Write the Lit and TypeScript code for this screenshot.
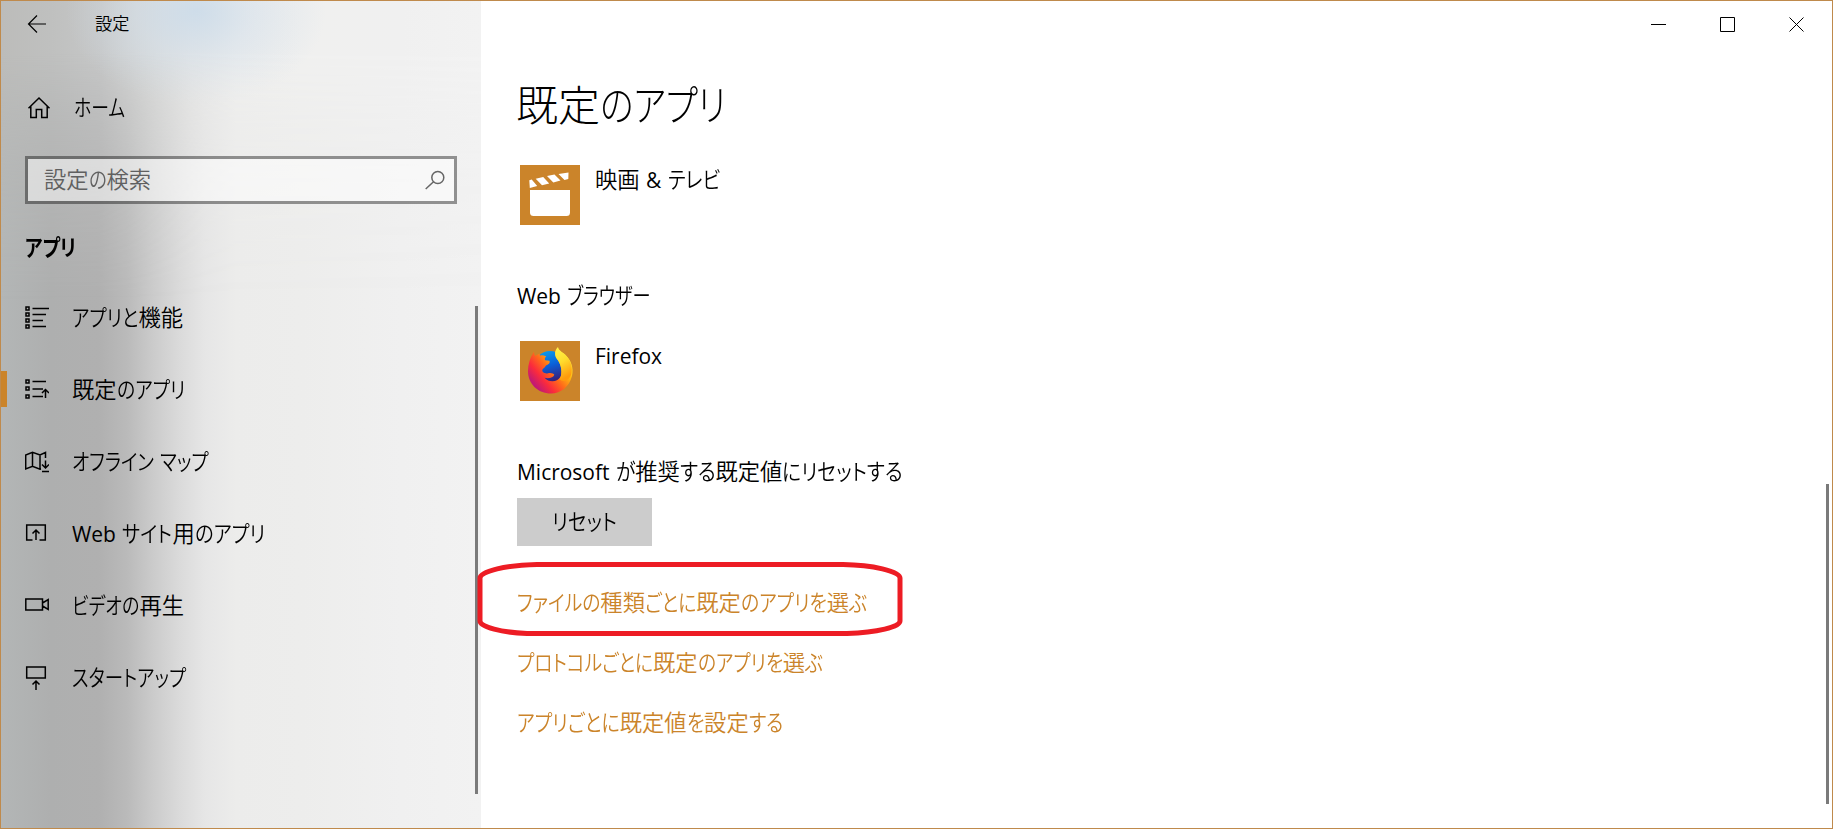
import { LitElement, html, css, svg } from "lit";
import { customElement, property } from "lit/decorators.js";

/* One line of text whose kana are condensed so that the line takes `width` pixels. */
@customElement("fit-text")
class FitText extends LitElement {
  @property() text = "";
  @property({ type: Number }) width = 0;

  static styles = css`
    :host { display: inline-flex; white-space: pre; font-feature-settings: "palt"; }
    .run { display: block; flex: none; }
    .kana { transform-origin: 0 50%; }
    .latin { font-size: 0.94em; font-weight: 400; word-spacing: 1px; }
  `;

  private runs() {
    return this.text.match(/[\u3040-\u30ff]+|[\u0020-\u007e]+|[^\u0020-\u007e\u3040-\u30ff]+/g) ?? [];
  }

  private kind(run: string) {
    if (/[\u3040-\u30ff]/.test(run)) return "kana";
    return /[\u0020-\u007e]/.test(run) ? "latin" : "kanji";
  }

  firstUpdated() {
    const spans = [...this.renderRoot.querySelectorAll<HTMLElement>(".run")];
    let fixed = 0;
    let kana = 0;
    for (const s of spans) {
      const w = s.getBoundingClientRect().width;
      if (s.classList.contains("kana")) kana += w;
      else fixed += w;
    }
    if (!kana || !this.width) return;
    const k = (this.width - fixed) / kana;
    for (const s of spans) {
      if (!s.classList.contains("kana")) continue;
      const w = s.getBoundingClientRect().width;
      s.style.width = `${w * k}px`;
      s.style.transform = `scaleX(${k})`;
    }
  }

  render() {
    return this.runs().map((r) => html`<span class="run ${this.kind(r)}">${r}</span>`);
  }
}

const box = (y: number) => svg`<rect x="1" y="${y}" width="3" height="3"/>`;

const icons: Record<string, unknown> = {
  features: svg`${[1, 7, 13, 19].map(box)}<path d="M7.5 2.5H24M7.5 8.5H21M7.5 14.5H18M7.5 20.5H21"/>`,
  defaults: svg`${[2, 9, 17].map((y) => box(y))}<path d="M7.5 3.5H21M7.5 11H18M7.5 18.5H18M20.5 20V11.5M17 15l3.5-3.5L24 15"/>`,
  maps: svg`<path d="M16 19l-1 .3-7.500-3L.7 19V5L7.500 2.200l7.500 2.800 5.500-2.500V8M7.500 2.200V16.300M15 5V19M20.500 10.500V18M17 14.500l3.500 3.500 3.500-3.500M17 21.500H24"/>`,
  sites: svg`<path d="M7.500 18H1.700V3H20.300V18H14.500M11 18V8M7.500 11.500L11 8l3.500 3.500"/>`,
  video: svg`<path d="M.8 5H17.500V16H.8ZM17.500 9L23.200 5.500V15.500L17.500 12"/>`,
  startup: svg`<path d="M1.700 1H20.300V12H1.700ZM11 24V15M7.500 18.500L11 15l3.500 3.500"/>`,
};

const nav = [
  { icon: "features", text: "アプリと機能", w: 111 },
  { icon: "defaults", text: "既定のアプリ", w: 113 },
  { icon: "maps", text: "オフライン マップ", w: 137 },
  { icon: "sites", text: "Web サイト用のアプリ", w: 193 },
  { icon: "video", text: "ビデオの再生", w: 112 },
  { icon: "startup", text: "スタートアップ", w: 114 },
];

const links = [
  { text: "ファイルの種類ごとに既定のアプリを選ぶ", w: 350 },
  { text: "プロトコルごとに既定のアプリを選ぶ", w: 306 },
  { text: "アプリごとに既定値を設定する", w: 266 },
];

@customElement("app-root")
class AppRoot extends LitElement {
  static styles = css`
    :host {
      display: block;
      height: 829px;
      overflow: hidden;
      font-family: "Open Sans", "Noto Sans CJK JP", sans-serif;
      font-size: 22.3px;
      font-weight: 350;
      line-height: 32px;
      color: #000;
    }
    * { box-sizing: border-box; }
    svg { display: block; fill: none; stroke: #000; stroke-width: 1.5; flex: none; }
    .window {
      position: relative;
      display: flex;
      width: 1833px;
      height: 829px;
      border: 1px solid #bf8a4c;
      background: #fff;
      overflow: hidden;
    }
    .side {
      position: relative;
      isolation: isolate;
      width: 480px;
      display: flex;
      flex-direction: column;
      background: linear-gradient(90deg, #b3b6b6 0, #aeafaf 50px, #b0b0b0 98px, #bababa 126px, #cbcbcb 152px, #dadada 178px, #e6e6e6 204px, #ececeb 235px, #ededec 300px, #f0f0f0 400px, #f2f2f2 480px);
    }
    .side::before {
      content: "";
      position: absolute;
      z-index: -1;
      inset: 0 0 auto 0;
      height: 300px;
      background:
        radial-gradient(ellipse 130px 95px at 195px 10px, rgba(202, 219, 234, 0.85), rgba(210, 223, 235, 0.5) 45%, rgba(225, 232, 240, 0) 100%),
        linear-gradient(90deg, #bcbcba 0, #bfc0bf 50px, #c6c7c7 100px, #d6d7d6 145px, #e5e5e4 190px, #eeeeed 235px, #f0f0ef 300px, #f0f0f0 400px, #f2f2f2 480px);
      -webkit-mask-image: linear-gradient(#000 0, #000 50px, rgba(0, 0, 0, 0.6) 110px, rgba(0, 0, 0, 0.3) 180px, transparent 300px);
      mask-image: linear-gradient(#000 0, #000 50px, rgba(0, 0, 0, 0.6) 110px, rgba(0, 0, 0, 0.3) 180px, transparent 300px);
    }
    .bar { height: 46px; display: flex; align-items: center; padding-left: 26px; font-size: 17.200px; }
    .bar svg { margin-right: 46px; stroke-width: 1.200; }
    .home { height: 72px; margin-top: 25px; display: flex; align-items: center; padding-left: 26px; }
    .home svg { margin-right: 21px; }
    .search {
      width: 432px;
      height: 48px;
      margin: 12px 0 0 24px;
      padding: 0 9px 0 16px;
      border: 3px solid rgba(0, 0, 0, 0.4);
      background: rgba(255, 255, 255, 0.5);
      background-clip: padding-box;
      display: flex;
      align-items: center;
      justify-content: space-between;
      color: #606060;
    }
    .search svg { stroke: #666; }
    .group { height: 78px; padding: 12px 0 0 24px; line-height: 64px; font-weight: 700; }
    .item { height: 72px; display: flex; align-items: center; padding-left: 24px; position: relative; }
    .item svg { margin-right: 23px; }
    .item.on::before { content: ""; position: absolute; left: 0; top: 17px; width: 6px; height: 36px; background: #cb842a; }
    .thumb { position: absolute; width: 3px; background: #7a7a7a; }
    .thumb.a { left: 474px; top: 305px; height: 488px; }
    .thumb.b { left: 1825px; top: 483px; height: 320px; }
    .main { flex: 1; display: flex; flex-direction: column; padding-left: 36px; position: relative; }
    .caps { position: absolute; right: 1px; top: 0; display: flex; }
    .caps span { width: 69px; height: 46px; display: grid; place-items: center; }
    .caps svg { stroke-width: 1; }
    h1 { margin: 68px 0 0; height: 72px; font-size: 42px; line-height: 72px; font-weight: 300; }
    h1 fit-text { margin-left: -1px; }
    .app { display: flex; height: 60px; margin: 24px 0 0 3px; gap: 15px; }
    .app svg { background: #cb842a; stroke: none; }
    .app fit-text { line-height: 30px; }
    .label { height: 32px; margin-top: 55px; }
    .app.ff { margin-top: 29px; }
    .label.ms { margin-top: 55px; }
    .btn { width: 135px; height: 48px; margin-top: 10px; background: #ccc; display: flex; align-items: center; justify-content: center; }
    .links { display: flex; flex-direction: column; margin-top: 27px; color: #cb842a; }
    .links div { height: 60px; display: flex; align-items: center; }
    .ring { position: absolute; left: 476px; top: 560px; stroke: #ed1c24; stroke-width: 5; }
  `;

  render() {
    return html`
      <div class="window">
        <div class="side">
          <div class="bar">
            <svg width="22" height="20"><path d="M19 10H2M10 1.500L1.500 10L10 18.500"/></svg>
            <fit-text text="設定"></fit-text>
          </div>
          <div class="home">
            <svg width="26" height="24"><path d="M1.500 12.300L12 2L22.500 12.300M3.800 10.500V21.500H9.300V13.500H14.700V21.500H20.200V10.500"/></svg>
            <fit-text text="ホーム" .width=${51}></fit-text>
          </div>
          <div class="search">
            <fit-text text="設定の検索" .width=${107}></fit-text>
            <svg width="20" height="20"><circle cx="12.800" cy="7.500" r="6"/><path d="M8.500 11.700L.7 19"/></svg>
          </div>
          <div class="group"><fit-text text="アプリ" .width=${51}></fit-text></div>
          ${nav.map(
            (n, i) => html`<div class="item ${i === 1 ? "on" : ""}">
              <svg width="24" height="24">${icons[n.icon]}</svg>
              <fit-text .text=${n.text} .width=${n.w}></fit-text>
            </div>`
          )}
        </div>
        <div class="main">
          <div class="caps">
            <span><svg width="15" height="15"><path d="M0 7.500H15"/></svg></span>
            <span><svg width="15" height="15"><path d="M.5.5H14.500V14.500H.5Z"/></svg></span>
            <span><svg width="15" height="15"><path d="M.5.5L14.500 14.500M14.500.5L.5 14.500"/></svg></span>
          </div>
          <h1><fit-text text="既定のアプリ" .width=${210}></fit-text></h1>
          <div class="app">
            <svg width="60" height="60" viewBox="0 0 60 60">
              <g fill="#fff">
                <path d="M10 25H50V47.500Q50 51 46.500 51H13.500Q10 51 10 47.500Z"/>
                <path d="M9.300 15.200L11.700 14.600L17.200 21L9.800 23ZM15.700 13.700L23.200 12L29.200 18.500L22 20.300ZM27 11L34.500 9.500L40.500 15.500L33.300 17.500ZM38.500 9L48.500 7.500L48.300 14L44.500 15Z"/>
              </g>
            </svg>
            <fit-text text="映画 & テレビ" .width=${125}></fit-text>
          </div>
          <div class="label"><fit-text text="Web ブラウザー" .width=${134}></fit-text></div>
          <div class="app ff">
            <svg width="60" height="60" viewBox="0 0 60 60">
              <defs>
                <linearGradient id="fx" x1="0.850" y1="0.100" x2="0.100" y2="0.750">
                  <stop offset="0" stop-color="#fff044"/><stop offset=".3" stop-color="#ffb60f"/>
                  <stop offset=".55" stop-color="#ff6a1a"/><stop offset=".78" stop-color="#fb2b3c"/>
                  <stop offset="1" stop-color="#c41a72"/>
                </linearGradient>
                <linearGradient id="gl" x1="0" y1="0" x2=".3" y2="1">
                  <stop offset="0" stop-color="#07a8f0"/><stop offset=".55" stop-color="#0b5fd8"/><stop offset="1" stop-color="#35227e"/>
                </linearGradient>
                <linearGradient id="tl" x1="0" y1="0" x2=".3" y2="1">
                  <stop offset="0" stop-color="#fff44c"/><stop offset=".5" stop-color="#ffdc2e"/><stop offset="1" stop-color="#ff9b0c"/>
                </linearGradient>
              </defs>
              <circle cx="30" cy="26" r="16" fill="url(#gl)"/>
              <path fill="url(#fx)" d="M14 10.500C14 13 14.500 14 15.500 15C17 13.600 18.500 13 20 12.800C19 14 19.500 14.500 20.500 14.500C22 14 24 14.300 26.300 15.500C24.800 16.500 24.500 18 25.200 19.200L29.500 19.800C30.300 22 29 23.500 26 24.500C24.500 27 23.500 27 22.500 28.500C21.500 31 25 33 28 32.200C31 31.500 33.500 32.300 34.300 33.700C33.500 36.500 29 38 24.500 36.800C29 42 38 41.500 41 35C42.500 30 40.500 22 37 18C34 14 35 9 38 6.300C38.500 9.500 42 11 45 13.500C51 19 54 27 52 35C49 46 41 52.500 31 52.500C18 52.500 8 43 8 30C8 23 10 17 14 10.500Z"/>
              <path fill="url(#tl)" d="M38 6.300C38.500 9.500 42 11 45 13.500C51 19 53 27 51 34C48 41 42 41 39.500 38C43 33 41.500 23 37 18C34 14 35 9 38 6.300Z"/>
            </svg>
            <fit-text text="Firefox"></fit-text>
          </div>
          <div class="label ms"><fit-text text="Microsoft が推奨する既定値にリセットする" .width=${386}></fit-text></div>
          <div class="btn"><fit-text text="リセット" .width=${65}></fit-text></div>
          <div class="links">
            ${links.map((l) => html`<div><fit-text .text=${l.text} .width=${l.w}></fit-text></div>`)}
          </div>
        </div>
        <div class="thumb a"></div>
        <div class="thumb b"></div>
        <svg class="ring" width="426" height="75">
          <path d="M60 3.500H366C395 4 423 10 423 17V60C423 66 400 71.500 370 72.500H50C25 71.500 3 66 3 60V17C3 10 30 4 60 3.500Z"/>
        </svg>
      </div>
    `;
  }
}
